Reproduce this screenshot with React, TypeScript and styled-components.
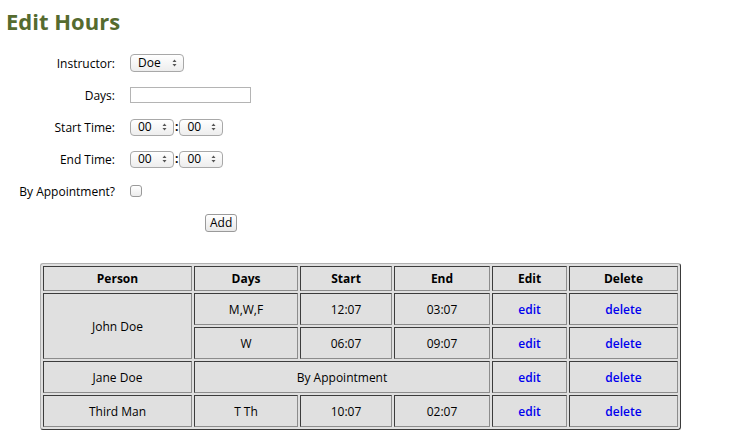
import React from "react";
import styled, { createGlobalStyle } from "styled-components";

const Global = createGlobalStyle`
  html, body { margin: 0; padding: 0; background: #fff; }
  body { font-family: "Open Sans", "DejaVu Sans", sans-serif; font-size: 12px; color: #000; }
`;

const Page = styled.div`
  padding: 6px 0 0 0;
`;

const Title = styled.h1`
  margin: 0 0 0 6px;
  font-family: "Open Sans", "DejaVu Sans", sans-serif;
  font-weight: 700;
  font-size: 22px;
  line-height: 30px;
  color: #556b2f;
`;

const Form = styled.form`
  display: grid;
  grid-template-columns: 97px auto;
  grid-auto-rows: 32px;
  column-gap: 15px;
  align-items: center;
  margin: 11px 0 0 18px;
`;

const Label = styled.label`
  justify-self: end;
  white-space: nowrap;
  font-size: 12px;
  font-weight: 500;
`;

const Field = styled.div<{ $indent?: number }>`
  display: flex;
  align-items: center;
  gap: 1px;
  padding-left: ${(p) => p.$indent ?? 0}px;
`;

const SelectWrap = styled.span`
  position: relative;
  display: inline-flex;
`;

const Select = styled.select<{ $w: number; $h: number }>`
  appearance: none;
  -webkit-appearance: none;
  width: ${(p) => p.$w}px;
  height: ${(p) => p.$h}px;
  box-sizing: border-box;
  border: 1px solid #a8a8a8;
  border-radius: 4px;
  background: linear-gradient(#ffffff, #ededed);
  font-family: "Open Sans", "DejaVu Sans", sans-serif;
  font-size: 12px;
  font-weight: 500;
  line-height: 1;
  padding: 0 0 0 7px;
  color: #000;
  margin: 0;
`;

const Arrows = styled.svg`
  position: absolute;
  right: 7px;
  top: 50%;
  transform: translateY(-50%);
  pointer-events: none;
`;

const Colon = styled.span`
  font-size: 12px;
  font-weight: 700;
  line-height: 1;
`;

const TextInput = styled.input`
  width: 121px;
  height: 16px;
  box-sizing: border-box;
  border: 1px solid #b4b4b4;
  margin: 0;
  padding: 0 2px;
  font-size: 12px;
`;

const Check = styled.input`
  appearance: none;
  -webkit-appearance: none;
  width: 12px;
  height: 12px;
  margin: 0;
  border: 1px solid #9a9a9a;
  border-radius: 3px;
  background: linear-gradient(#ffffff, #ececec);
`;

const Button = styled.button`
  height: 18px;
  padding: 0 4px;
  border: 1px solid #9a9a9a;
  border-radius: 3px;
  background: linear-gradient(#ffffff, #e8e8e8);
  font-family: "Open Sans", "DejaVu Sans", sans-serif;
  font-size: 12px;
  font-weight: 500;
  line-height: 1;
  color: #000;
`;

const Table = styled.table`
  margin: 24px 0 0 40px;
  width: 640px;
  table-layout: fixed;
  border-collapse: separate;
  border-spacing: 2px;
  background: #e0e0e0;
  border: 1px solid;
  border-color: #b0b0b0 #3a3a3a #3a3a3a #b0b0b0;
  border-radius: 3px;
`;

const Cell = styled.td<{ $head?: boolean }>`
  box-sizing: border-box;
  height: ${(p) => (p.$head ? 25 : 32)}px;
  padding: 0 4px;
  text-align: center;
  vertical-align: middle;
  font-size: 12px;
  font-weight: ${(p) => (p.$head ? 700 : 500)};
  background: #e0e0e0;
  border: 1px solid;
  border-color: #3c3c3c #8c8c8c #8c8c8c #3c3c3c;
`;

const Link = styled.a`
  color: #0000ee;
  text-decoration: none;
  font-weight: 600;
`;

const SelectBox = ({ value, w, h }: { value: string; w: number; h: number }) => (
  <SelectWrap>
    <Select $w={w} $h={h} defaultValue={value}>
      <option>{value}</option>
    </Select>
    <Arrows width="5" height="8" viewBox="0 0 5 8">
      <path d="M2.5 0.5 L4.5 3 L0.5 3 Z M2.5 7.5 L4.5 5 L0.5 5 Z" fill="#555" />
    </Arrows>
  </SelectWrap>
);

const TimePick = () => (
  <Field>
    <SelectBox value="00" w={44} h={17} />
    <Colon>:</Colon>
    <SelectBox value="00" w={44} h={17} />
  </Field>
);

const cols = [149, 104, 92, 96, 75, 109];

export default function App() {
  return (
    <Page>
      <Global />
      <Title>Edit Hours</Title>
      <Form onSubmit={(e) => e.preventDefault()}>
        <Label>Instructor:</Label>
        <Field>
          <SelectBox value="Doe" w={54} h={18} />
        </Field>
        <Label>Days:</Label>
        <Field>
          <TextInput type="text" />
        </Field>
        <Label>Start Time:</Label>
        <TimePick />
        <Label>End Time:</Label>
        <TimePick />
        <Label>By Appointment?</Label>
        <Field>
          <Check type="checkbox" />
        </Field>
        <span />
        <Field $indent={75}>
          <Button type="submit">Add</Button>
        </Field>
      </Form>
      <Table>
        <colgroup>
          {cols.map((c, i) => (
            <col key={i} style={{ width: c }} />
          ))}
        </colgroup>
        <thead>
          <tr>
            <Cell as="th" $head>Person</Cell>
            <Cell as="th" $head>Days</Cell>
            <Cell as="th" $head>Start</Cell>
            <Cell as="th" $head>End</Cell>
            <Cell as="th" $head>Edit</Cell>
            <Cell as="th" $head>Delete</Cell>
          </tr>
        </thead>
        <tbody>
          <tr>
            <Cell rowSpan={2}>John Doe</Cell>
            <Cell>M,W,F</Cell>
            <Cell>12:07</Cell>
            <Cell>03:07</Cell>
            <Cell><Link href="#">edit</Link></Cell>
            <Cell><Link href="#">delete</Link></Cell>
          </tr>
          <tr>
            <Cell>W</Cell>
            <Cell>06:07</Cell>
            <Cell>09:07</Cell>
            <Cell><Link href="#">edit</Link></Cell>
            <Cell><Link href="#">delete</Link></Cell>
          </tr>
          <tr>
            <Cell>Jane Doe</Cell>
            <Cell colSpan={3}>By Appointment</Cell>
            <Cell><Link href="#">edit</Link></Cell>
            <Cell><Link href="#">delete</Link></Cell>
          </tr>
          <tr>
            <Cell>Third Man</Cell>
            <Cell>T Th</Cell>
            <Cell>10:07</Cell>
            <Cell>02:07</Cell>
            <Cell><Link href="#">edit</Link></Cell>
            <Cell><Link href="#">delete</Link></Cell>
          </tr>
        </tbody>
      </Table>
    </Page>
  );
}
